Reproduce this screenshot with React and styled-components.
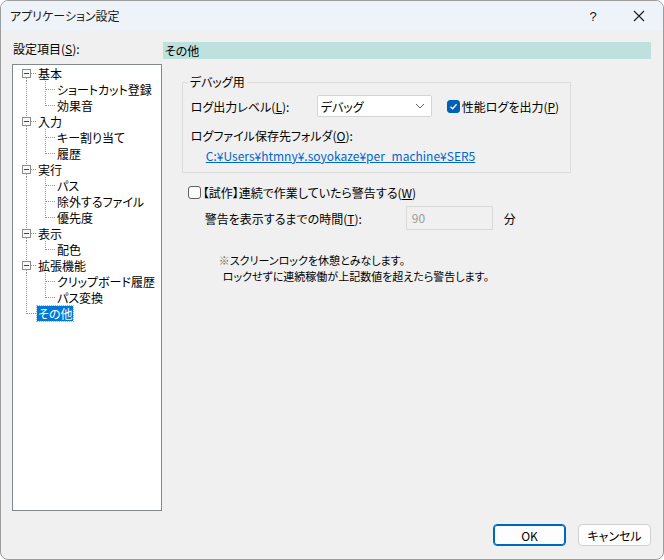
import styled, { createGlobalStyle } from "styled-components";

const GlobalStyle = createGlobalStyle`
  html, body {
    margin: 0;
    padding: 0;
    background: #ffffff;
  }
  body {
    font-family: "Noto Sans CJK JP", "Noto Sans", sans-serif;
    font-size: 12px;
    font-feature-settings: "palt" 1;
    color: #000;
  }
  button {
    font-feature-settings: "palt" 1;
  }
`;

const tree = [
  { label: "基本", children: ["ショートカット登録", "効果音"] },
  { label: "入力", children: ["キー割り当て", "履歴"] },
  { label: "実行", children: ["パス", "除外するファイル", "優先度"] },
  { label: "表示", children: ["配色"] },
  { label: "拡張機能", children: ["クリップボード履歴", "パス変換"] },
  { label: "その他", children: [], selected: true },
];

const DOT = { stroke: "#9a9a9a", strokeWidth: 1, strokeDasharray: "1 1" };

const RootGutter = ({ first, last, open }) => (
  <svg width="24" height="16" viewBox="0 0 24 16">
    {open ? (
      <>
        {!first && <line x1="13.5" y1="0" x2="13.5" y2="4" {...DOT} />}
        {!last && <line x1="13.5" y1="13" x2="13.5" y2="16" {...DOT} />}
        <line x1="18" y1="8.5" x2="24" y2="8.5" {...DOT} />
        <rect x="9.5" y="4.5" width="8" height="8" fill="#f7f7f7" stroke="#8c8c8c" />
        <line x1="11" y1="8.5" x2="16" y2="8.5" stroke="#2a3f9a" strokeWidth="1" />
      </>
    ) : (
      <>
        <line x1="13.5" y1="0" x2="13.5" y2={last ? 9 : 16} {...DOT} />
        <line x1="14" y1="8.5" x2="24" y2="8.5" {...DOT} />
      </>
    )}
  </svg>
);

const ChildGutter = ({ lastChild }) => (
  <svg width="43" height="16" viewBox="0 0 43 16">
    <line x1="13.5" y1="0" x2="13.5" y2="16" {...DOT} />
    <line x1="32.5" y1="0" x2="32.5" y2={lastChild ? 9 : 16} {...DOT} />
    <line x1="33" y1="8.5" x2="42" y2="8.5" {...DOT} />
  </svg>
);

const Key = ({ k }) => (
  <>
    (<U>{k}</U>)
  </>
);

export default function App() {
  const rows = [];
  tree.forEach((node, i) => {
    rows.push(
      <TreeRow key={node.label}>
        <RootGutter
          first={i === 0}
          last={i === tree.length - 1}
          open={node.children.length > 0}
        />
        <ItemLabel $selected={node.selected}>{node.label}</ItemLabel>
      </TreeRow>
    );
    node.children.forEach((c, j) => {
      rows.push(
        <TreeRow key={node.label + c}>
          <ChildGutter lastChild={j === node.children.length - 1} />
          <ItemLabel>{c}</ItemLabel>
        </TreeRow>
      );
    });
  });

  return (
    <>
      <GlobalStyle />
      <Window>
        <TitleBar>
          <Title>アプリケーション設定</Title>
          <TitleButtons>
            <TitleBtn>?</TitleBtn>
            <TitleBtn>
              <svg width="12" height="12" viewBox="0 0 12 12">
                <path d="M1 1 L11 11 M11 1 L1 11" stroke="#1a1a1a" strokeWidth="1.1" />
              </svg>
            </TitleBtn>
          </TitleButtons>
        </TitleBar>
        <Body>
          <Content>
            <Sidebar>
              <SideLabel>
                設定項目<Key k="S" />:
              </SideLabel>
              <Tree>{rows}</Tree>
            </Sidebar>
            <Panel>
              <Header>その他</Header>
              <Group>
                <Legend>デバッグ用</Legend>
                <LevelRow>
                  <FieldLabel $width={126}>
                    ログ出力レベル<Key k="L" />:
                  </FieldLabel>
                  <Select>
                    <span>デバッグ</span>
                    <svg width="10" height="6" viewBox="0 0 10 6">
                      <path d="M1 1 L5 5 L9 1" fill="none" stroke="#606060" strokeWidth="1" />
                    </svg>
                  </Select>
                  <Check $checked>
                    <svg width="9" height="9" viewBox="0 0 9 9">
                      <path d="M1.5 4.8 L3.6 6.8 L7.6 2.2" fill="none" stroke="#fff" strokeWidth="1.3" />
                    </svg>
                  </Check>
                  <CheckText>
                    性能ログを出力<Key k="P" />
                  </CheckText>
                </LevelRow>
                <FolderLabel>
                  ログファイル保存先フォルダ<Key k="O" />:
                </FolderLabel>
                <PathLink>C:¥Users¥htmny¥.soyokaze¥per_machine¥SER5</PathLink>
              </Group>
              <WarnRow>
                <Check />
                <CheckText>
                  【試作】連続で作業していたら警告する<Key k="W" />
                </CheckText>
              </WarnRow>
              <TimeRow>
                <FieldLabel $width={201}>
                  警告を表示するまでの時間<Key k="T" />:
                </FieldLabel>
                <NumberBox>90</NumberBox>
                <Unit>分</Unit>
              </TimeRow>
              <Note>
                <NoteLine>
                  <Mark>※</Mark>スクリーンロックを休憩とみなします。
                </NoteLine>
                <NoteLine $indent>ロックせずに連続稼働が上記数値を超えたら警告します。</NoteLine>
              </Note>
            </Panel>
          </Content>
          <Footer>
            <Button $primary>OK</Button>
            <Button>キャンセル</Button>
          </Footer>
        </Body>
      </Window>
    </>
  );
}

const Window = styled.div`
  width: 664px;
  height: 560px;
  box-sizing: border-box;
  border: 1px solid #9c9c9c;
  border-radius: 8px;
  overflow: hidden;
  background: #f0f0f0;
  display: flex;
  flex-direction: column;
`;

const TitleBar = styled.div`
  height: 30px;
  flex-shrink: 0;
  background: #eef3f9;
  display: flex;
  align-items: center;
  justify-content: space-between;
  padding-left: 9px;
`;

const Title = styled.div`
  font-size: 12px;
  line-height: 16px;
  color: #1a1a1a;
`;

const TitleButtons = styled.div`
  display: flex;
  align-items: center;
  height: 100%;
`;

const TitleBtn = styled.div`
  width: 46px;
  height: 100%;
  display: flex;
  align-items: center;
  justify-content: center;
  font-family: "Liberation Sans", sans-serif;
  font-size: 13px;
  color: #1a1a1a;
  &:first-child {
    width: 44px;
  }
  &:last-child {
    width: 48px;
  }
`;

const Body = styled.div`
  flex: 1;
  display: flex;
  flex-direction: column;
  padding: 11px 12px 0 11px;
`;

const Content = styled.div`
  display: flex;
  gap: 1px;
`;

const Sidebar = styled.div`
  width: 150px;
  display: flex;
  flex-direction: column;
`;

const SideLabel = styled.div`
  height: 22px;
  line-height: 13px;
  padding-left: 1px;
`;

const U = styled.span`
  text-decoration: underline;
`;

const Tree = styled.div`
  height: 447px;
  box-sizing: border-box;
  border: 1px solid #828790;
  background: #fff;
  display: flex;
  flex-direction: column;
`;

const TreeRow = styled.div`
  display: flex;
  align-items: center;
  height: 16px;
  svg {
    flex-shrink: 0;
    display: block;
  }
`;

const ItemLabel = styled.span`
  line-height: 15px;
  padding: 0 1px;
  white-space: nowrap;
  color: ${(p) => (p.$selected ? "#fff" : "#000")};
  background: ${(p) => (p.$selected ? "#0078d7" : "transparent")};
  outline: ${(p) => (p.$selected ? "1px dotted #f0a030" : "none")};
`;

const Panel = styled.div`
  width: 489px;
  display: flex;
  flex-direction: column;
`;

const Header = styled.div`
  height: 17px;
  line-height: 17px;
  background: #bee1de;
  padding-left: 2px;
`;

const Group = styled.fieldset`
  margin: 15px 0 0 19px;
  width: 389px;
  box-sizing: border-box;
  min-width: 0;
  border: 1px solid #dcdcdc;
  padding: 0 8px 8px 8px;
`;

const Legend = styled.legend`
  padding: 0 2px;
  margin-left: -3px;
  line-height: 16px;
`;

const LevelRow = styled.div`
  display: flex;
  align-items: center;
  margin-top: 5px;
  height: 22px;
`;

const FieldLabel = styled.div`
  width: ${(p) => p.$width}px;
  flex-shrink: 0;
  white-space: nowrap;
`;

const CheckText = styled.span`
  white-space: nowrap;
`;

const Select = styled.div`
  width: 115px;
  height: 22px;
  box-sizing: border-box;
  background: #fff;
  border: 1px solid #d4d4d4;
  border-radius: 2px;
  display: flex;
  align-items: center;
  justify-content: space-between;
  padding: 0 6px 0 3px;
  margin-right: 15px;
  flex-shrink: 0;
`;

const Check = styled.div`
  width: 13px;
  height: 13px;
  box-sizing: border-box;
  border-radius: 3px;
  flex-shrink: 0;
  margin-right: 2px;
  display: flex;
  align-items: center;
  justify-content: center;
  background: ${(p) => (p.$checked ? "#005fb8" : "#fbfbfb")};
  border: 1px solid ${(p) => (p.$checked ? "#005fb8" : "#5f5f5f")};
`;

const FolderLabel = styled.div`
  margin-top: 11px;
  line-height: 16px;
`;

const PathLink = styled.a`
  display: block;
  margin: 4px 0 0 15px;
  line-height: 16px;
  color: #0066cc;
  text-decoration: underline;
  cursor: pointer;
`;

const WarnRow = styled.div`
  display: flex;
  align-items: center;
  margin: 11px 0 0 25px;
  height: 16px;
`;

const TimeRow = styled.div`
  display: flex;
  align-items: center;
  margin: 6px 0 0 42px;
  height: 24px;
`;

const NumberBox = styled.div`
  width: 87px;
  height: 24px;
  box-sizing: border-box;
  border: 1px solid #d9d9d9;
  color: #9b9b9b;
  line-height: 22px;
  padding-left: 5px;
`;

const Unit = styled.span`
  margin-left: 11px;
`;

const Note = styled.div`
  margin: 22px 0 0 56px;
`;

const NoteLine = styled.div`
  font-size: 11px;
  line-height: 16px;
  white-space: nowrap;
  padding-left: ${(p) => (p.$indent ? "4px" : "0")};
`;

const Mark = styled.span`
  color: #7a6a3a;
`;

const Footer = styled.div`
  display: flex;
  justify-content: flex-end;
  gap: 12px;
  margin-top: 13px;
`;

const Button = styled.button`
  width: 73px;
  height: 22px;
  box-sizing: border-box;
  font-family: "Noto Sans CJK JP", "Noto Sans", sans-serif;
  font-size: 12px;
  color: #000;
  background: #fdfdfd;
  border: 1px solid ${(p) => (p.$primary ? "#0067c0" : "#d0d0d0")};
  border-radius: 4px;
  padding: 0;
  box-shadow: ${(p) => (p.$primary ? "inset 0 0 0 1px #0067c0" : "none")};
`;
